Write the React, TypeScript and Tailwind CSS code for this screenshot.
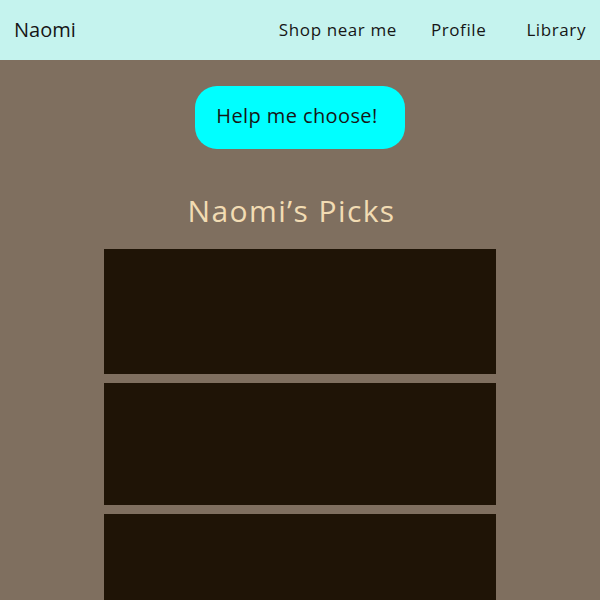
const font = { fontFamily: '"Open Sans", "Noto Sans", sans-serif' }

export default function App() {
  return (
    <div className="min-h-[600px] bg-[#7f6f5f]" style={font}>
      <nav className="h-[60px] bg-[#c5f3ee] flex items-center justify-between pl-[14px] pr-[14px] text-[#161616]">
        <span className="text-[20px] leading-[24px]">Naomi</span>
        <div className="flex items-center text-[17px] leading-[24px] tracking-[0.6px]">
          <a>Shop near me</a>
          <a className="ml-[34px]">Profile</a>
          <a className="ml-[40px]">Library</a>
        </div>
      </nav>
      <main className="flex flex-col items-center pt-[26px]">
        <button className="w-[210px] h-[63px] pb-[3px] pr-[6px] rounded-[22px] bg-[#00ffff] text-[20px] tracking-[0.4px] text-[#161616]">
          Help me choose!
        </button>
        <h2 className="mt-[42px] pr-[17px] text-[30px] text-[#f2dcb3] tracking-[1.4px] leading-[40px]">Naomi’s Picks</h2>
        <div className="mt-[18px] w-[392px] flex flex-col gap-[9px]">
          <div className="h-[125px] bg-[#1f1406]" />
          <div className="h-[122px] bg-[#1f1406]" />
          <div className="h-[86px] bg-[#1f1406]" />
        </div>
      </main>
    </div>
  )
}
